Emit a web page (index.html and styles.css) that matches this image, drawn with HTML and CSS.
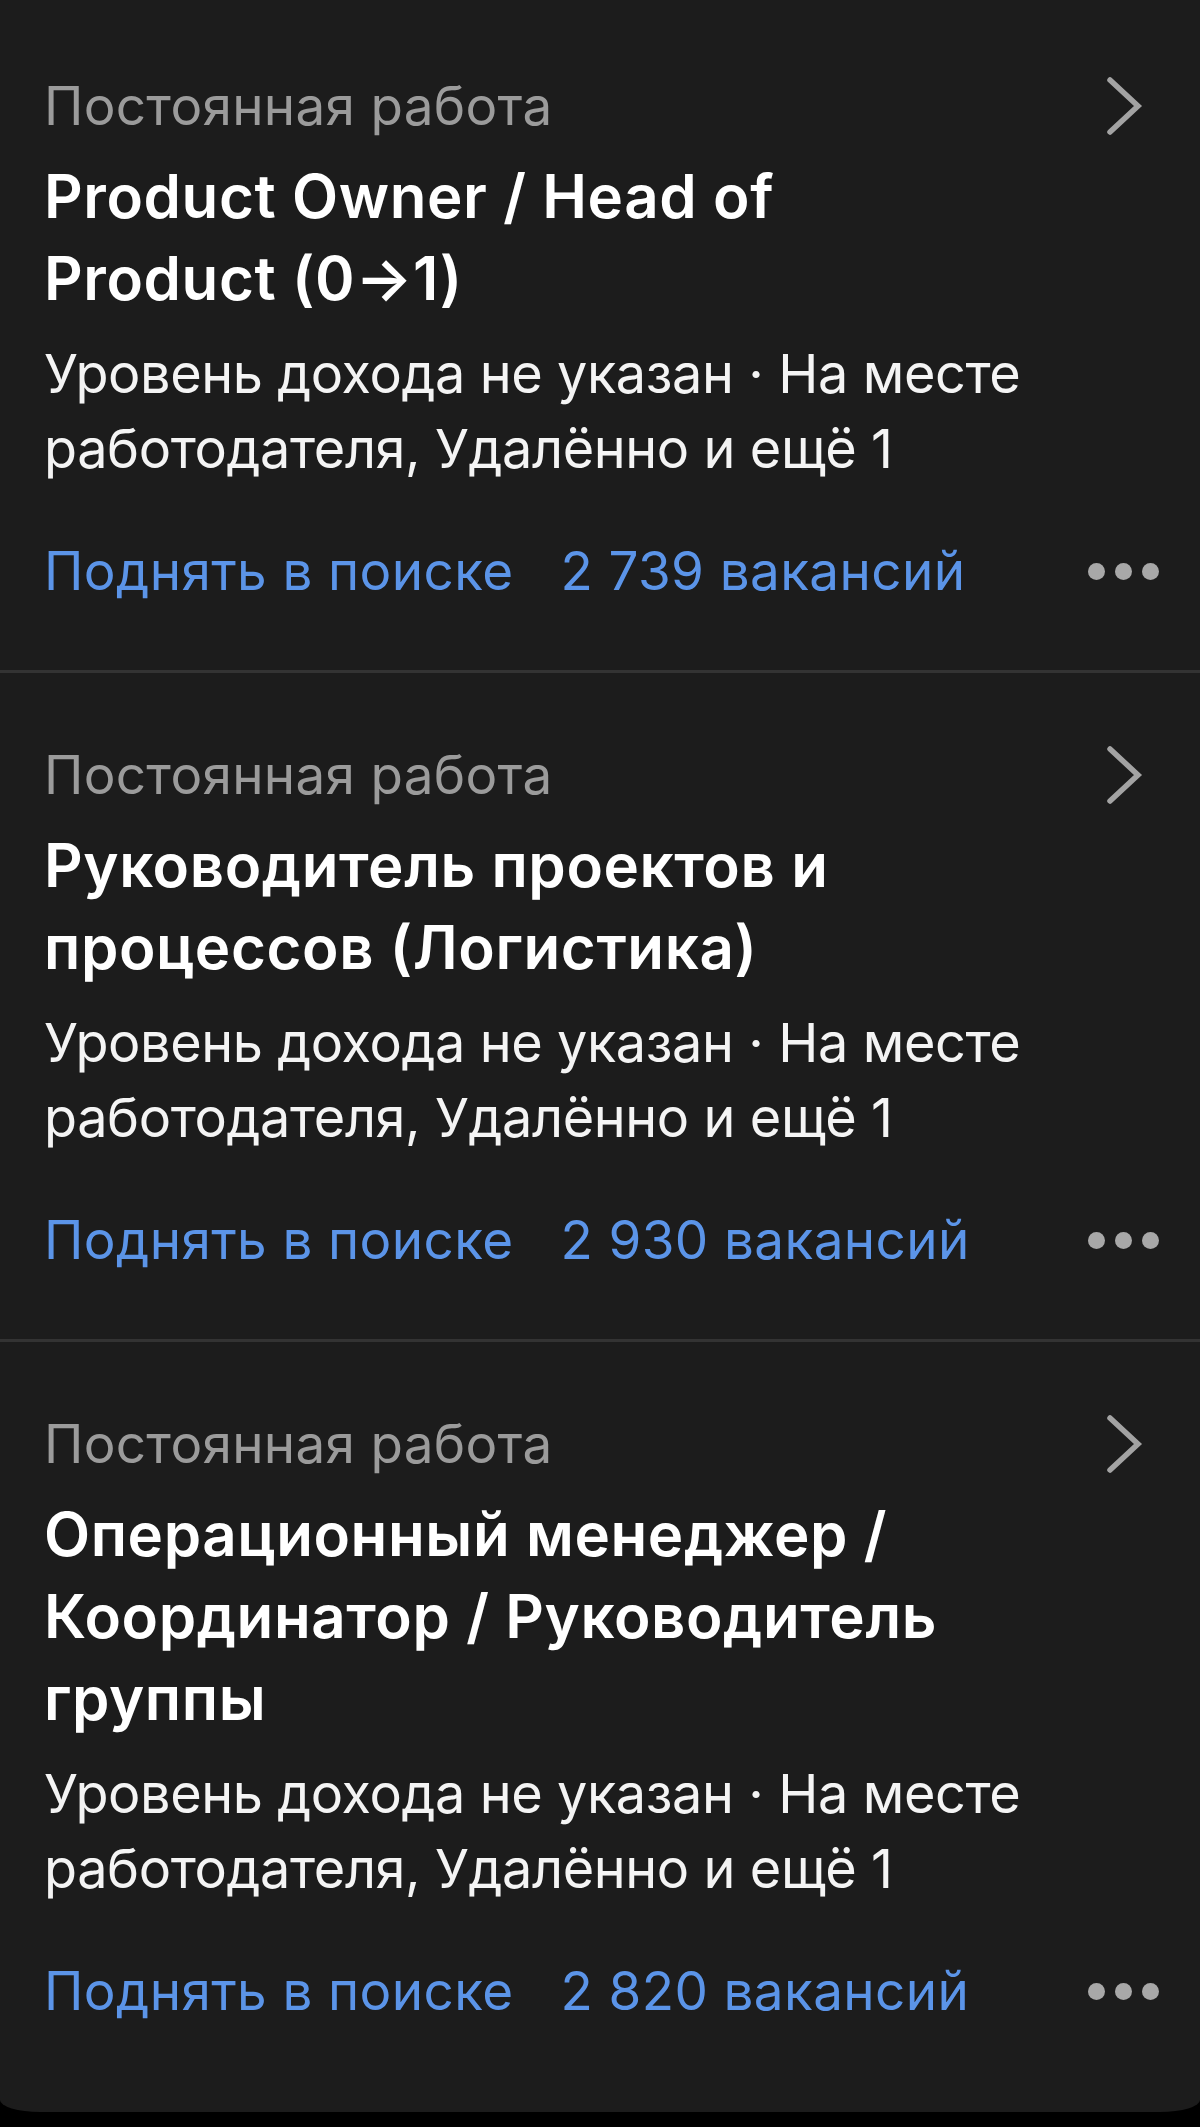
FILE: index.html
```html
<!DOCTYPE html>
<html lang="ru">
<head>
    <meta charset="UTF-8">
    <meta name="viewport" content="width=device-width, initial-scale=1.0">
    <title>Мои вакансии</title>
    <link rel="stylesheet" href="styles.css">
</head>
<body>

    <div class="vacancies">

        <div class="vacancy">
            <div class="vacancy-head">
                <span class="vacancy-type">Постоянная работа</span>
                <svg class="chevron" viewBox="0 0 40 60"><path d="M5 4 L33 30 L5 56"/></svg>
            </div>
            <div class="vacancy-title">Product Owner / Head of Product (0→1)</div>
            <div class="vacancy-info">Уровень дохода не указан · На месте работодателя, Удалённо и ещё 1</div>
            <div class="vacancy-actions">
                <a href="#" class="action-link">Поднять в поиске</a>
                <a href="#" class="action-link">2&nbsp;739 вакансий</a>
                <span class="more"><i></i><i></i><i></i></span>
            </div>
        </div>

        <div class="vacancy">
            <div class="vacancy-head">
                <span class="vacancy-type">Постоянная работа</span>
                <svg class="chevron" viewBox="0 0 40 60"><path d="M5 4 L33 30 L5 56"/></svg>
            </div>
            <div class="vacancy-title">Руководитель проектов и процессов (Логистика)</div>
            <div class="vacancy-info">Уровень дохода не указан · На месте работодателя, Удалённо и ещё 1</div>
            <div class="vacancy-actions">
                <a href="#" class="action-link">Поднять в поиске</a>
                <a href="#" class="action-link">2&nbsp;930 вакансий</a>
                <span class="more"><i></i><i></i><i></i></span>
            </div>
        </div>

        <div class="vacancy">
            <div class="vacancy-head">
                <span class="vacancy-type">Постоянная работа</span>
                <svg class="chevron" viewBox="0 0 40 60"><path d="M5 4 L33 30 L5 56"/></svg>
            </div>
            <div class="vacancy-title">Операционный менеджер / Координатор / Руководитель группы</div>
            <div class="vacancy-info">Уровень дохода не указан · На месте работодателя, Удалённо и ещё 1</div>
            <div class="vacancy-actions">
                <a href="#" class="action-link">Поднять в поиске</a>
                <a href="#" class="action-link">2&nbsp;820 вакансий</a>
                <span class="more"><i></i><i></i><i></i></span>
            </div>
        </div>

    </div>

</body>
</html>
```

FILE: styles.css
```css
* {
    margin: 0;
    padding: 0;
    box-sizing: border-box;
}

body {
    font-family: 'Inter', 'Liberation Sans', sans-serif;
    background-color: #000;
    color: #fff;
}

.vacancies {
    background-color: #1c1c1c;
    padding-top: 4px;
    padding-bottom: 22px;
    border-radius: 0 0 40px 40px / 0 0 12px 12px;
}

.vacancy {
    padding: 70px 41px 67px 44px;
    border-bottom: 3px solid #333;
}

.vacancy:last-child {
    border-bottom: none;
}

.vacancy-head {
    display: flex;
    justify-content: space-between;
    align-items: center;
    height: 64px;
}

.vacancy-type {
    font-size: 53px;
    line-height: 64px;
    letter-spacing: 0.3px;
    color: #9b9b9b;
}

.chevron {
    width: 40px;
    height: 60px;
    margin-right: 14px;
    fill: none;
    stroke: #a3a3a3;
    stroke-width: 5.5;
    stroke-linecap: round;
    stroke-linejoin: miter;
}

.vacancy-title {
    margin-top: 17px;
    max-width: 975px;
    font-size: 60px;
    line-height: 82px;
    letter-spacing: 0.6px;
    font-weight: 600;
    color: #fff;
}

.vacancy-info {
    margin-top: 17px;
    font-size: 54px;
    line-height: 75px;
    letter-spacing: -0.4px;
    color: #f4f4f4;
}

.vacancy-actions {
    display: flex;
    align-items: center;
    gap: 47px;
    margin-top: 53px;
    height: 64px;
}

.action-link {
    font-size: 53px;
    line-height: 64px;
    letter-spacing: 0.4px;
    color: #5b94e8;
    text-decoration: none;
}

.more {
    display: flex;
    gap: 10px;
    margin-left: auto;
}

.more i {
    width: 17px;
    height: 17px;
    border-radius: 50%;
    background-color: #a8a8a8;
}
```
